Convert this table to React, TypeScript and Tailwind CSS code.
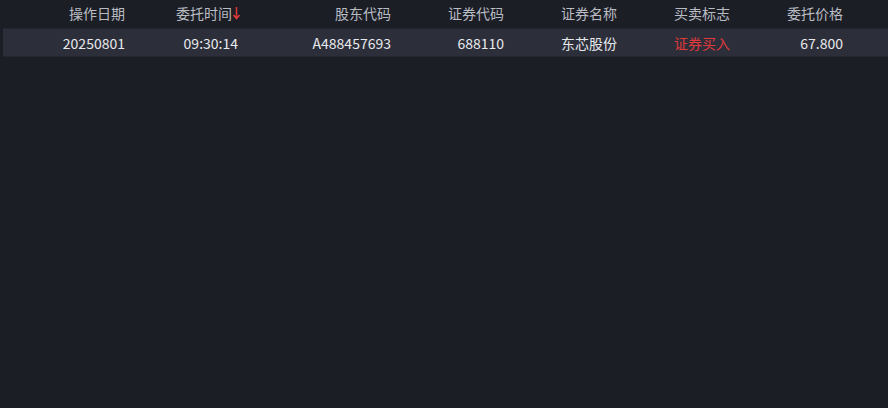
import React from "react";

const cols = [
  { w: "w-[125px]", rw: "w-[122px]", h: "操作日期", v: "20250801" },
  { w: "w-[116px]", rw: "w-[116px]", h: "委托时间", v: "09:30:14", arrow: true },
  { w: "w-[150px]", rw: "w-[150px]", h: "股东代码", v: "A488457693" },
  { w: "w-[113px]", rw: "w-[113px]", h: "证券代码", v: "688110" },
  { w: "w-[113px]", rw: "w-[113px]", h: "证券名称", v: "东芯股份" },
  { w: "w-[113px]", rw: "w-[113px]", h: "买卖标志", v: "证券买入", red: true },
  { w: "w-[113px]", rw: "w-[113px]", h: "委托价格", v: "67.800" },
];

export default function App() {
  return (
    <div
      className="w-[888px] h-[408px] bg-[#1c1e25] overflow-hidden text-[14px]"
      style={{ fontFamily: '"Noto Sans CJK SC", "Microsoft YaHei", sans-serif' }}
    >
      <div className="flex h-[28px] items-center pb-[3px]">
        {cols.map((c, i) => (
          <div key={i} className={`${c.w} shrink-0 flex justify-end items-center text-[#b9bcc3] leading-none`}>
            <span>{c.h}</span>
            {c.arrow && (
              <svg width="9" height="14" viewBox="0 0 9 14">
                <path d="M4.5 1 V12 M1.5 9 L4.5 12.5 L7.5 9" stroke="#e0393a" strokeWidth="1.5" fill="none" />
              </svg>
            )}
          </div>
        ))}
      </div>
      <div className="ml-[3px] flex h-[29px] items-center bg-[#2c2f3a] border-y border-[#23262e]">
        {cols.map((c, i) => (
          <div
            key={i}
            className={`${c.rw} shrink-0 flex justify-end leading-none ${c.red ? "text-[#e0393a]" : "text-[#e8e9ec]"} ${c.arrow ? "pr-[3px]" : ""}`}
          >
            {c.v}
          </div>
        ))}
      </div>
    </div>
  );
}
